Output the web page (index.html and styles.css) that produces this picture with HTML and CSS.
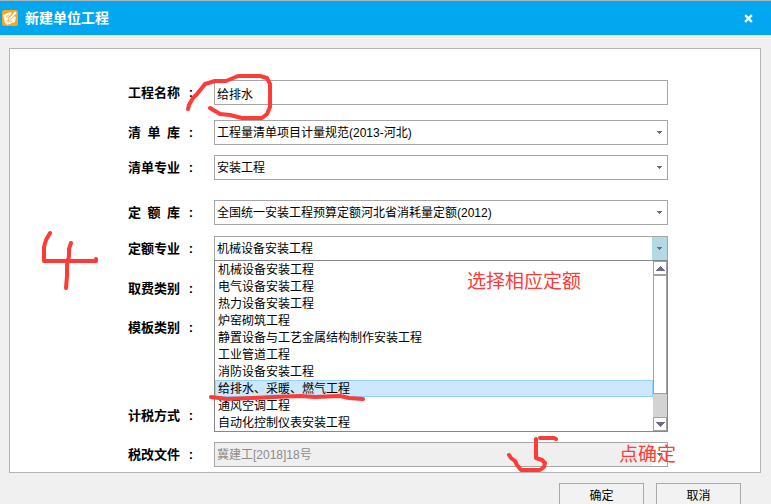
FILE: index.html
```html
<!DOCTYPE html>
<html lang="zh-CN">
<head>
<meta charset="utf-8">
<title>新建单位工程</title>
<link rel="stylesheet" href="styles.css">
</head>
<body>
<header class="titlebar">
  <svg class="app-icon" viewBox="0 0 16 16" aria-hidden="true">
    <rect width="16" height="16" rx="2" fill="#f9a51f"/>
    <path d="M1 5L8 2L10 3L6 8L8 9L12 6L14 7L13 12L5 15L3 13Z" fill="#fff6e2"/>
    <path d="M4 7L7 5M5 10L6 12L10 11" fill="none" stroke="#f7c67a"/>
    <path d="M6 11L7 8L13 1L15 3L9 9Z" fill="#fff" stroke="#f3a93a" stroke-width=".7"/>
  </svg>
  <h1 class="title">新建单位工程</h1>
  <button class="close" type="button" aria-label="关闭">
    <svg viewBox="0 0 8 8" aria-hidden="true"><path d="M1 1L7 7M7 1L1 7" stroke="#fff" stroke-width="2"/></svg>
  </button>
</header>
<main>
  <form class="panel" id="project">
    <div class="row">
      <label for="name"><span>工程名称</span><span>:</span></label>
      <input class="field" id="name" type="text" value="给排水">
    </div>
    <div class="row row-spaced">
      <label for="list"><span>清&ensp;单&ensp;库</span><span>:</span></label>
      <div class="combo">
        <select class="field" id="list"><option>工程量清单项目计量规范(2013-河北)</option></select>
        <svg class="arrow" viewBox="0 0 5 3" aria-hidden="true"><path d="M0 0H5V1H4V2H3V3H2V2H1V1H0Z"/></svg>
      </div>
    </div>
    <div class="row row-tight">
      <label for="list-major"><span>清单专业</span><span>:</span></label>
      <div class="combo">
        <select class="field" id="list-major"><option>安装工程</option></select>
        <svg class="arrow" viewBox="0 0 5 3" aria-hidden="true"><path d="M0 0H5V1H4V2H3V3H2V2H1V1H0Z"/></svg>
      </div>
    </div>
    <div class="row row-group">
      <label for="quota"><span>定&ensp;额&ensp;库</span><span>:</span></label>
      <div class="combo">
        <select class="field" id="quota"><option>全国统一安装工程预算定额河北省消耗量定额(2012)</option></select>
        <svg class="arrow" viewBox="0 0 5 3" aria-hidden="true"><path d="M0 0H5V1H4V2H3V3H2V2H1V1H0Z"/></svg>
      </div>
    </div>
    <div class="row row-quota">
      <label for="quota-major"><span>定额专业</span><span>:</span></label>
      <div class="combo combo-open">
        <select class="field" id="quota-major"><option>机械设备安装工程</option></select>
        <svg class="arrow" viewBox="0 0 5 3" aria-hidden="true"><path d="M0 0H5V1H4V2H3V3H2V2H1V1H0Z"/></svg>
        <div class="popup">
          <ul class="options" role="listbox" aria-label="定额专业">
            <li role="option">机械设备安装工程</li>
            <li role="option">电气设备安装工程</li>
            <li role="option">热力设备安装工程</li>
            <li role="option">炉窑砌筑工程</li>
            <li role="option">静置设备与工艺金属结构制作安装工程</li>
            <li role="option">工业管道工程</li>
            <li role="option">消防设备安装工程</li>
            <li role="option" class="selected" aria-selected="true">给排水、采暖、燃气工程</li>
            <li role="option">通风空调工程</li>
            <li role="option">自动化控制仪表安装工程</li>
          </ul>
          <div class="scrollbar">
            <button class="step" type="button" aria-label="向上滚动"><svg viewBox="0 0 9 5" aria-hidden="true"><path d="M4 0H5V1H6V2H7V3H8V4H9V5H0V4H1V3H2V2H3V1H4Z"/></svg></button>
            <div class="thumb"></div>
            <button class="step" type="button" aria-label="向下滚动"><svg viewBox="0 0 9 5" aria-hidden="true"><path d="M4 5H5V4H6V3H7V2H8V1H9V0H0V1H1V2H2V3H3V4H4Z"/></svg></button>
          </div>
        </div>
      </div>
    </div>
    <div class="row row-spaced">
      <span class="caption"><span>取费类别</span><span>:</span></span>
    </div>
    <div class="row row-medium">
      <span class="caption"><span>模板类别</span><span>:</span></span>
    </div>
    <div class="row row-far">
      <span class="caption"><span>计税方式</span><span>:</span></span>
    </div>
    <div class="row row-medium">
      <label for="tax"><span>税改文件</span><span>:</span></label>
      <div class="combo combo-disabled">
        <select class="field" id="tax" disabled><option>冀建工[2018]18号</option></select>
        <svg class="arrow" viewBox="0 0 5 3" aria-hidden="true"><path d="M0 0H5V1H4V2H3V3H2V2H1V1H0Z"/></svg>
      </div>
    </div>
  </form>
</main>
<footer class="actions">
  <button type="submit" form="project">确定</button>
  <button type="button">取消</button>
</footer>
<div class="notes">
  <svg class="ink" width="771" height="504" viewBox="0 0 771 504" aria-hidden="true">
    <path d="M188 109L189 105L193 98L197 94L205 84L215 81H226L238 76H260L267 78L270 84V107L267 114L262 118H242L230 115L220 114L210 108"/>
    <path d="M50 233L46 240L44 247V261H96V259M71 243L69 249V256L67 265V276L66 288"/>
    <path d="M211 397L219 398L227 399L253 398L273 397L300 396L315 397L340 396L349 398L363 399"/>
    <path d="M509 455L511 458L515 461L517 465L521 470H540L544 467L545 463L542 460L536 458V439M540 438H554L556 439"/>
  </svg>
  <p class="note note-choose">选择相应定额</p>
  <p class="note note-confirm">点确定</p>
</div>
</body>
</html>
```
FILE: styles.css
```css
* {
  box-sizing: border-box;
}

body {
  position: relative;
  margin: 0;
  min-height: 100vh;
  overflow: hidden;
  background: #f0f0f0;
  color: #000;
  font: 12px/17px "Liberation Sans", "Noto Sans CJK SC", sans-serif;
}

button,
input,
select {
  margin: 0;
  border-radius: 0;
  color: inherit;
  font: inherit;
}

.titlebar {
  display: flex;
  align-items: center;
  height: 35px;
  padding: 0 18px 0 2px;
  border-top: 1px solid #a9b4bb;
  background: #02a7f0;
  color: #fff;
}

.app-icon {
  width: 16px;
  height: 16px;
}

.title {
  flex: 1;
  margin: 0 0 0 7px;
  font-size: 14px;
  line-height: 20px;
}

.close {
  display: flex;
  padding: 0;
  border: 0;
  background: none;
}

.close svg {
  width: 9px;
  height: 9px;
}

.panel {
  margin: 13px 10px 0 9px;
  padding: 31px 92px 5px 118px;
  border: 1px solid #b4b4b4;
  background: #fff;
}

.row {
  display: flex;
  align-items: center;
  height: 25px;
}

.row-spaced { margin-top: 15px; }
.row-tight { margin-top: 10px; }
.row-quota { margin-top: 11px; }
.row-group { margin-top: 20px; }
.row-medium { margin-top: 14px; }
.row-far { margin-top: 63px; }

label,
.caption {
  display: flex;
  justify-content: space-between;
  width: 65px;
  margin-right: 21px;
  font-size: 13px;
  font-weight: bold;
  white-space: nowrap;
}

.field {
  flex: 1;
  width: 100%;
  min-width: 0;
  height: 25px;
  padding: 2px 2px 0;
  border: 1px solid #a6a6a6;
  outline: 0;
  background: #fff;
  appearance: none;
}

.combo {
  position: relative;
  flex: 1;
  height: 25px;
}

.arrow {
  position: absolute;
  top: 1px;
  right: 1px;
  width: 15px;
  height: 23px;
  padding: 10px 5px;
  fill: #6b6c7e;
  pointer-events: none;
}

.combo-open .arrow {
  background: #b2d9e4;
}

.combo-disabled .field {
  background: #efefef;
  color: #8c8c8c;
  opacity: 1;
}

.combo-disabled .arrow {
  background: #fff;
}

.popup {
  position: absolute;
  z-index: 1;
  top: 24px;
  left: 0;
  right: 0;
  display: flex;
  border: 1px solid #828790;
  background: #fff;
}

.options {
  flex: 1;
  margin: 0;
  padding: 0;
  list-style: none;
}

.options li {
  height: 17px;
  padding: 1px 0 0 3px;
  line-height: 17px;
}

.options .selected {
  background: #cce8ff;
  box-shadow: inset 0 0 0 1px #99d1ff;
}

.scrollbar {
  display: flex;
  flex-direction: column;
  width: 14px;
  background: #d3d3d3;
}

.step {
  display: flex;
  align-items: center;
  justify-content: center;
  height: 14px;
  padding: 0;
  border: 1px solid #a0a0a0;
  background: #fff;
}

.step:last-child {
  margin-top: auto;
}

.step svg {
  width: 9px;
  height: 5px;
  fill: #6b6c7e;
}

.thumb {
  height: 70%;
  border: 1px solid #a0a0a0;
  background: #fff;
}

.actions {
  display: flex;
  justify-content: flex-end;
  gap: 12px;
  padding: 10px 30px 0;
}

.actions button {
  width: 85px;
  height: 26px;
  padding: 0;
  border: 1px solid #a9a9a9;
  background: #f2f2f2;
}

.notes {
  position: absolute;
  z-index: 2;
  top: 0;
  left: 0;
  color: #fd3b37;
  pointer-events: none;
}

.ink {
  display: block;
  fill: none;
  stroke: currentColor;
  stroke-width: 4;
  stroke-linecap: round;
  stroke-linejoin: round;
}

.note {
  position: absolute;
  margin: 0;
  font-size: 19px;
  line-height: 28px;
  white-space: nowrap;
}

.note-choose {
  top: 268px;
  left: 467px;
}

.note-confirm {
  top: 441px;
  left: 619px;
}
```
